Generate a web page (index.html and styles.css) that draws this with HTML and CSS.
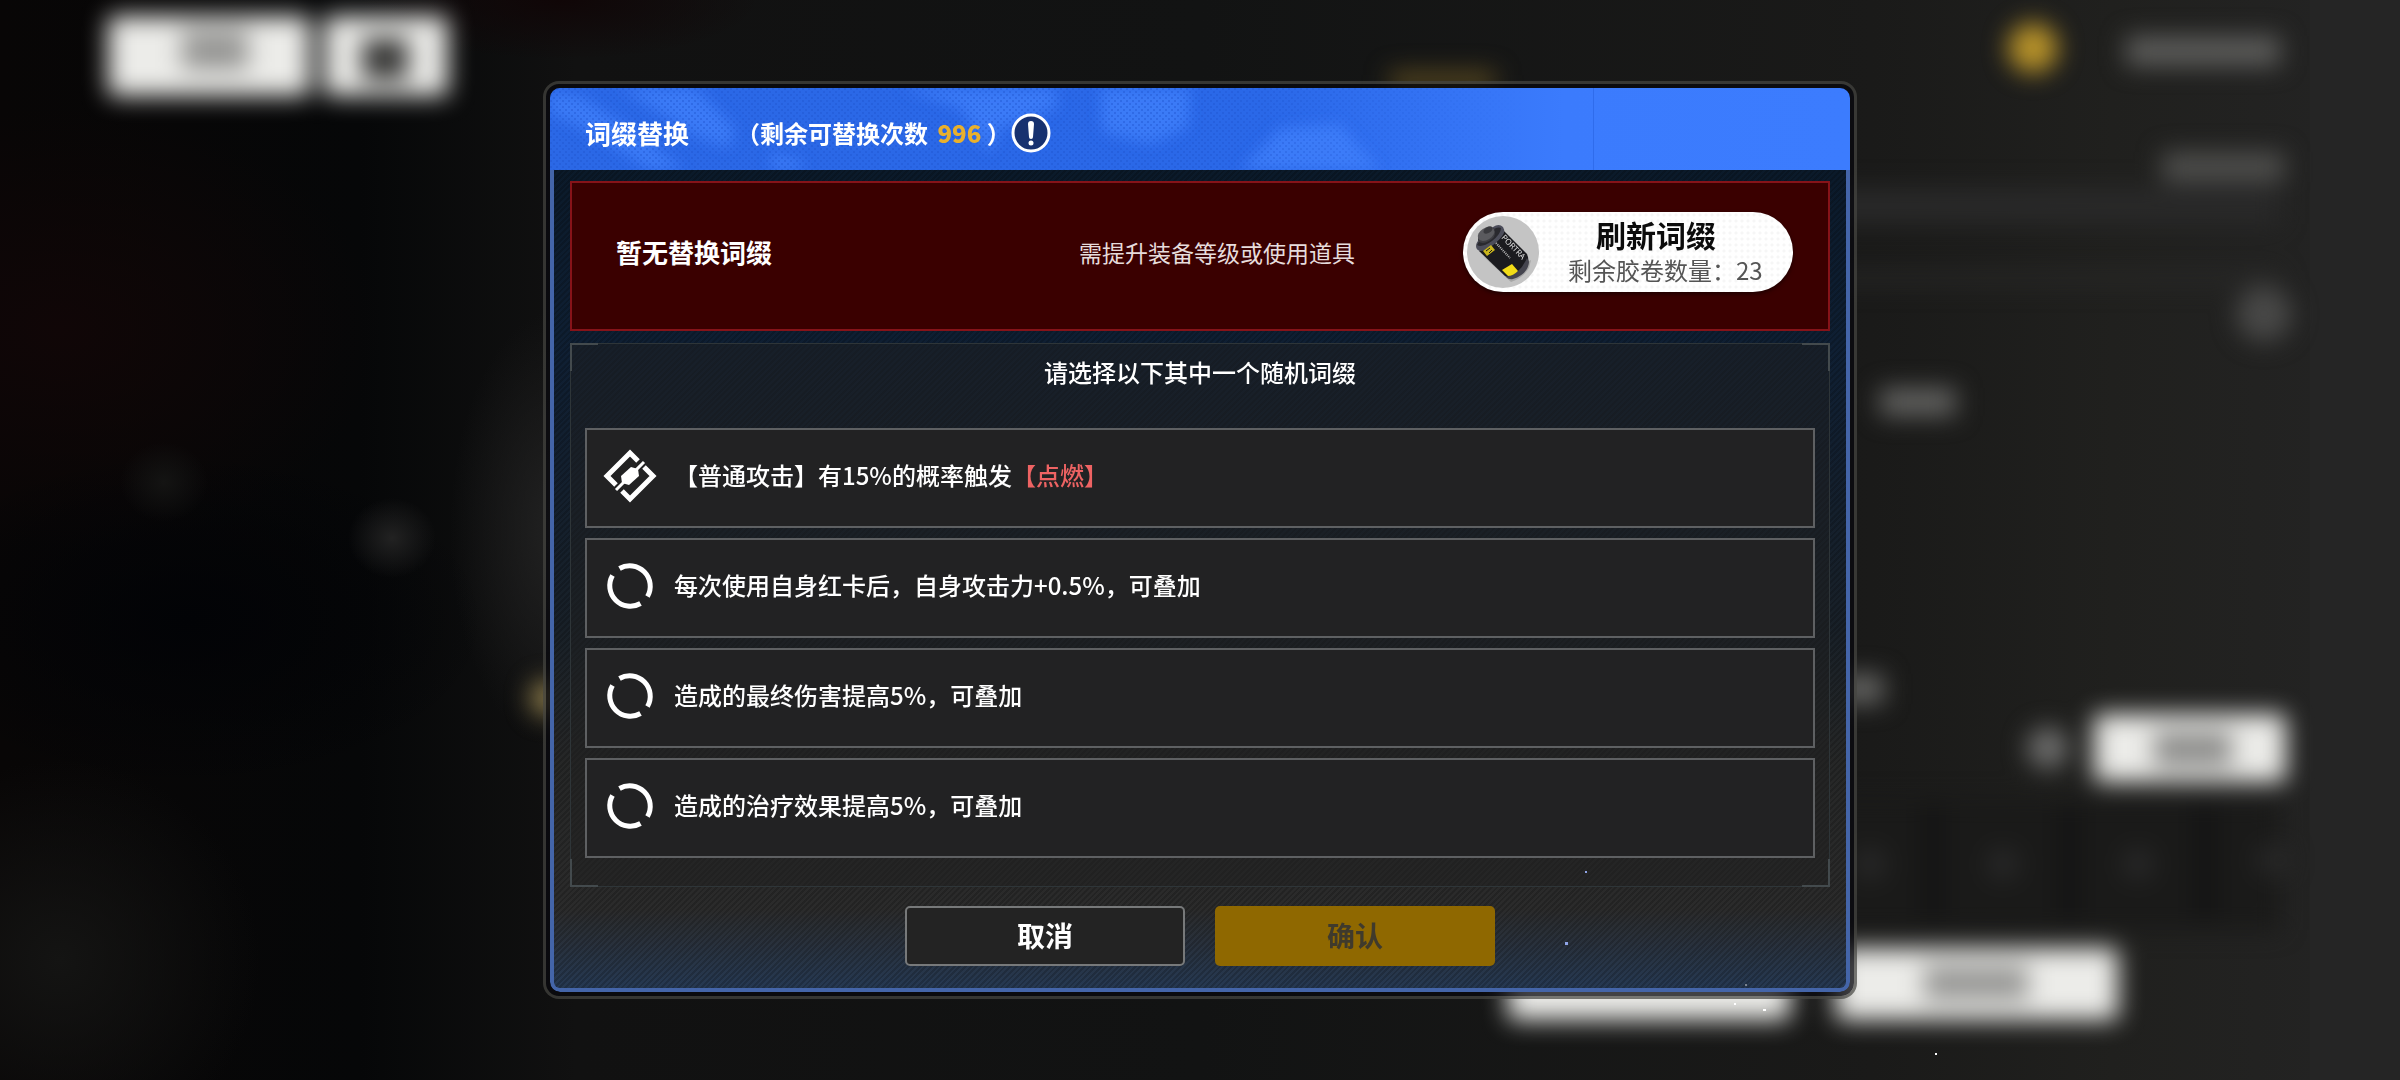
FILE: index.html
```html
<!DOCTYPE html>
<html lang="zh-CN">
<head>
  <meta charset="UTF-8" />
  <title>词缀替换</title>
  <meta name="viewport" content="width=device-width, initial-scale=1.0" />
  <link rel="stylesheet" href="styles.css">
</head>
<body>

  <!-- blurred game screen behind the dialog -->
  <svg class="backdrop" viewBox="0 0 2400 1080" preserveAspectRatio="none" aria-hidden="true">
    <defs>
      <linearGradient id="scene" x1="0" y1="0" x2="1" y2="0">
        <stop offset="0" stop-color="#080606" />
        <stop offset="0.15" stop-color="#060708" />
        <stop offset="0.24" stop-color="#111111" />
        <stop offset="0.5" stop-color="#121313" />
        <stop offset="0.78" stop-color="#1a1a19" />
        <stop offset="0.88" stop-color="#20201e" />
        <stop offset="1" stop-color="#242424" />
      </linearGradient>
      <radialGradient id="red"><stop offset="0" stop-color="#100607" /><stop offset="1" stop-color="#100607" stop-opacity="0" /></radialGradient>
      <radialGradient id="black"><stop offset="0" stop-color="#020306" /><stop offset="1" stop-color="#020306" stop-opacity="0" /></radialGradient>
      <radialGradient id="grey"><stop offset="0" stop-color="#222" /><stop offset="1" stop-color="#222" stop-opacity="0" /></radialGradient>
      <radialGradient id="dusk"><stop offset="0" stop-color="#141413" /><stop offset="1" stop-color="#141413" stop-opacity="0" /></radialGradient>
      <filter id="soft" filterUnits="userSpaceOnUse" x="0" y="-60" width="2400" height="1200" color-interpolation-filters="sRGB"><feGaussianBlur stdDeviation="12" /></filter>
    </defs>
    <rect width="2400" height="1080" fill="url(#scene)" />
    <rect x="2310" width="90" height="1080" fill="#252525" />

    <ellipse cx="60" cy="330" rx="320" ry="220" fill="url(#red)" />
    <ellipse cx="560" cy="0" rx="200" ry="60" fill="url(#red)" />
    <ellipse cx="190" cy="620" rx="300" ry="170" fill="url(#black)" />
    <ellipse cx="560" cy="530" rx="110" ry="220" fill="url(#grey)" />
    <ellipse cx="60" cy="960" rx="200" ry="200" fill="url(#dusk)" />
    <ellipse cx="164" cy="482" rx="44" ry="40" fill="url(#dusk)" />
    <ellipse cx="392" cy="538" rx="44" ry="40" fill="url(#grey)" />

    <g filter="url(#soft)">
      <rect x="108" y="16" width="202" height="80" rx="6" fill="#ecece9" />
      <rect x="182" y="30" width="66" height="40" fill="#969694" />
      <rect x="324" y="16" width="124" height="80" rx="6" fill="#ecece9" />
      <rect x="362" y="38" width="46" height="42" fill="#383837" />

      <circle cx="2033" cy="48" r="25" fill="#b8932a" />
      <rect x="2126" y="36" width="154" height="30" fill="#5c5c5a" />
      <rect x="2162" y="152" width="122" height="30" fill="#4e4e4c" />
      <rect x="1830" y="188" width="450" height="36" fill="#292929" />
      <rect x="1830" y="272" width="450" height="12" fill="#292928" />
      <circle cx="2264" cy="314" r="28" fill="#484847" />
      <rect x="1880" y="388" width="76" height="28" fill="#626260" />
      <rect x="1840" y="674" width="44" height="30" fill="#626260" />
      <rect x="1390" y="72" width="105" height="18" fill="#5a4a20" />
      <circle cx="548" cy="698" r="18" fill="#8a7a4a" />

      <circle cx="2048" cy="748" r="21" fill="#6c6c6b" />
      <rect x="2094" y="714" width="192" height="68" rx="6" fill="#ecece9" />
      <rect x="2154" y="732" width="78" height="34" fill="#8c8c8a" />

      <rect x="1830" y="800" width="450" height="130" fill="#1a1a19" />
      <g fill="#141414">
        <rect x="1922" y="806" width="22" height="110" />
        <rect x="2058" y="806" width="22" height="110" />
        <rect x="2194" y="806" width="22" height="110" />
      </g>
      <g fill="#282828">
        <circle cx="1870" cy="864" r="16" />
        <circle cx="2003" cy="864" r="16" />
        <circle cx="2138" cy="864" r="16" />
        <circle cx="2272" cy="860" r="16" />
      </g>

      <rect x="1508" y="948" width="282" height="72" rx="6" fill="#ecece9" />
      <rect x="1836" y="948" width="282" height="72" rx="6" fill="#ecece9" />
      <rect x="1924" y="966" width="104" height="34" fill="#969694" />
    </g>
  </svg>

  <main class="stage">
    <section class="dialog-frame" role="dialog" aria-labelledby="dialog-title">
      <div class="dialog">

        <header class="dialog-header">
          <svg class="header-art" viewBox="0 0 1300 82" preserveAspectRatio="none" aria-hidden="true">
            <defs>
              <linearGradient id="headerBlue" x1="0" y1="0" x2="1" y2="0">
                <stop offset="0" stop-color="#2b68e6" />
                <stop offset="0.55" stop-color="#2a68e8" />
                <stop offset="0.78" stop-color="#3b7bfd" />
                <stop offset="1" stop-color="#3c7cfe" />
              </linearGradient>
              <pattern id="dots" width="6" height="6" patternUnits="userSpaceOnUse">
                <circle cx="1" cy="1" r="1" fill="#1f55cf" />
                <circle cx="4" cy="4" r="1" fill="#1f55cf" />
              </pattern>
              <linearGradient id="dotFade" x1="0" y1="0" x2="1" y2="0">
                <stop offset="0" stop-color="#fff" />
                <stop offset="0.5" stop-color="#fff" />
                <stop offset="0.75" stop-color="#000" />
              </linearGradient>
              <mask id="dotMask"><rect width="1300" height="82" fill="url(#dotFade)" /></mask>
              <filter id="artBlur"><feGaussianBlur stdDeviation="7" /></filter>
            </defs>
            <rect width="1300" height="82" fill="url(#headerBlue)" />
            <g fill="#4080fb" opacity="0.8" filter="url(#artBlur)">
              <path d="M0 4 L30 8 L85 44 L135 82 L100 82 L60 56 L0 24 Z" />
              <path d="M70 0 L145 0 L185 40 L180 60 L150 50 Z" />
              <path d="M350 0 L505 0 L508 20 L450 40 L440 66 L410 20 Z" />
              <path d="M550 0 L640 0 L638 40 L600 56 L552 44 Z" />
              <path d="M220 64 L255 74 L250 82 L222 82 Z" />
              <path d="M730 40 L790 36 L830 82 L690 82 Z" />
            </g>
            <rect width="1300" height="82" fill="url(#dots)" mask="url(#dotMask)" opacity="0.55" />
            <rect x="1043" width="1" height="82" fill="#2f6cec" />
          </svg>
          <h1 id="dialog-title">词缀替换</h1>
          <p class="remaining">（剩余可替换次数 <strong>996</strong> ）</p>
          <button class="info-button" type="button" aria-label="说明">
            <svg viewBox="0 0 40 40" aria-hidden="true">
              <circle cx="20" cy="20" r="18" fill="#17316f" stroke="#fff" stroke-width="3" />
              <path d="M17 11 a3 3 0 0 1 6 0 L22 24 a2 2 0 0 1 -4 0 Z" fill="#fff" />
              <circle cx="20" cy="30" r="2.5" fill="#fff" />
            </svg>
          </button>
        </header>

        <div class="dialog-body">

          <div class="current">
            <h2>暂无替换词缀</h2>
            <p>需提升装备等级或使用道具</p>
            <button class="refresh-button" type="button">
              <svg class="film" viewBox="0 0 72 72" aria-hidden="true">
                <circle cx="36" cy="36" r="36" fill="#c4c4c4" />
                <path d="M16 40 L44 66 Q56 62 62 52 L64 44 L40 58 Z" fill="#a6a6a6" />
                <path d="M12 35 L36 14 L60 38 Q63 45 60 51 Q53 61 42 62 L38 60 Z" fill="#1b1b1f" />
                <path d="M39 61 Q53 58 60 42 L62 46 Q61 58 46 63 Q42 64 39 61 Z" fill="#45454f" />
                <path d="M9 30 Q9 26 14 22 L26 11 Q32 7 36 11 Q38 14 37 17 Q34 23 26 29 Q19 35 13 35 Q9 34 9 30 Z" fill="#4c4d5a" />
                <path d="M10 29 Q12 24 21 17 Q30 10 34 12 Q34 18 25 25 Q15 32 10 29 Z" fill="#29292e" />
                <path d="M11 20 L11 25 Q15 29 22 25 Q29 21 28 16 L27 12 Z" fill="#3d3d42" />
                <ellipse cx="19" cy="18" rx="9" ry="6" transform="rotate(-32 19 18)" fill="#5a5a5e" />
                <ellipse cx="21" cy="14" rx="5" ry="3" transform="rotate(-32 21 14)" fill="#3a3a3e" />
                <path d="M16 35 L24 29 L28 34 L20 40 Z" fill="#c9b51c" />
                <path d="M19 35 L23 32 M22 37 L25 34" stroke="#1b1b1f" stroke-width="1" />
                <path d="M35 54 L45 48 L51 55 Q46 60 41 60 Z" fill="#f2dc17" />
                <text class="film-label" transform="translate(34 22) rotate(46)">PORTRA</text>
                <path d="M29 27 L43 42" stroke="#bdbdbd" stroke-width="2" stroke-dasharray="1 1" />
              </svg>
              <span class="refresh-text">
                <span class="refresh-title">刷新词缀</span>
                <span class="refresh-count">剩余胶卷数量：23</span>
              </span>
            </button>
          </div>

          <div class="choices">
            <h3>请选择以下其中一个随机词缀</h3>
            <ul>
              <li>
                <button class="choice" type="button">
                  <svg class="choice-icon" viewBox="0 0 54 54" aria-hidden="true">
                    <g fill="none" stroke="#fff" stroke-width="5">
                      <path d="M13 36 L4 27 L27 4 L35 12" />
                      <path d="M41 18 L50 27 L27 50 L19 42" />
                    </g>
                    <path d="M13 41 L41 13" stroke="#fff" stroke-width="3" />
                    <path d="M28 18 L35 20 L36 27 L26 36 L19 34 L18 27 Z" fill="#fff" />
                  </svg>
                  <span>【普通攻击】有15%的概率触发<em>【点燃】</em></span>
                </button>
              </li>
              <li>
                <button class="choice" type="button">
                  <svg class="choice-icon" viewBox="0 0 54 54" aria-hidden="true">
                    <g id="ring" fill="none" stroke="#fff" stroke-width="5">
                      <path d="M16.5 9.5 A20.5 20.5 0 0 1 44.5 37.5" />
                      <path d="M37.5 44.5 A20.5 20.5 0 0 1 9.5 16.5" />
                    </g>
                  </svg>
                  <span>每次使用自身红卡后，自身攻击力+0.5%，可叠加</span>
                </button>
              </li>
              <li>
                <button class="choice" type="button">
                  <svg class="choice-icon" viewBox="0 0 54 54" aria-hidden="true"><use href="#ring" /></svg>
                  <span>造成的最终伤害提高5%，可叠加</span>
                </button>
              </li>
              <li>
                <button class="choice" type="button">
                  <svg class="choice-icon" viewBox="0 0 54 54" aria-hidden="true"><use href="#ring" /></svg>
                  <span>造成的治疗效果提高5%，可叠加</span>
                </button>
              </li>
            </ul>
          </div>

          <footer class="actions">
            <button class="cancel" type="button">取消</button>
            <button class="confirm" type="button" disabled>确认</button>
          </footer>

        </div>
      </div>
    </section>
  </main>

  <svg class="particles" viewBox="0 0 2400 1080" preserveAspectRatio="none" aria-hidden="true">
    <g fill="#8fa4e8">
      <rect x="1585" y="871" width="2" height="2" />
      <rect x="1565" y="942" width="3" height="3" />
    </g>
    <g fill="#fff">
      <rect x="1763" y="1009" width="3" height="2" />
      <rect x="1734" y="1003" width="2" height="2" />
      <rect x="1935" y="1053" width="2" height="2" />
      <rect x="1745" y="984" width="2" height="2" opacity="0.4" />
    </g>
  </svg>

</body>
</html>
```
FILE: styles.css
```css
* {
  box-sizing: border-box;
}

body {
  margin: 0;
  background: #111;
  color: #fff;
  font-family: "Noto Sans CJK SC", sans-serif;
  font-size: 24px;
  line-height: 36px;
}

h1, h2, h3, p, ul {
  margin: 0;
  padding: 0;
}

ul {
  list-style: none;
}

button {
  font: inherit;
  color: inherit;
  cursor: pointer;
}

.backdrop,
.particles {
  position: fixed;
  inset: 0;
  width: 100%;
  height: 100%;
}

.particles {
  pointer-events: none;
}

.stage {
  position: relative;
  min-height: 100vh;
  display: flex;
  align-items: center;
  justify-content: center;
}

/* dialog */
.dialog-frame {
  width: 92%;
  max-width: 1314px;
  padding: 4px;
  border: 3px solid rgba(70, 70, 66, 0.7);
  border-radius: 16px;
  background: rgba(8, 8, 14, 0.75);
  background-clip: padding-box;
}

.dialog {
  border-radius: 10px;
  overflow: hidden;
}

.dialog-header {
  position: relative;
  display: flex;
  align-items: center;
  min-height: 82px;
  padding: 7px 35px 0;
}

.header-art {
  position: absolute;
  inset: 0;
  width: 100%;
  height: 100%;
}

.dialog-header h1 {
  position: relative;
  font-size: 26px;
  font-weight: 700;
}

.remaining {
  position: relative;
  margin-left: 47px;
  font-weight: 700;
}

.remaining strong {
  margin-left: 4px;
  color: #e9b02c;
}

.info-button {
  position: relative;
  width: 40px;
  height: 40px;
  padding: 0;
  border: 0;
  background: none;
}

.info-button svg {
  display: block;
}

.dialog-body {
  display: flex;
  flex-direction: column;
  padding: 11px 16px 22px;
  border: 4px solid #4465a9;
  border-top: 0;
  border-radius: 0 0 10px 10px;
  background:
    repeating-linear-gradient(135deg, rgba(0, 0, 0, 0.18) 0 2px, transparent 2px 4px),
    linear-gradient(#0b1a2a 0%, #0f1f33 22%, #182028 55%, #262727 72%, #2b2b2b 90%, #263850 99%);
  background-origin: border-box;
}

/* current affix */
.current {
  display: flex;
  align-items: center;
  min-height: 150px;
  padding: 0 35px 8px 44px;
  border: 2px solid #861319;
  background: #3a0000;
}

.current h2 {
  font-size: 26px;
  font-weight: 700;
}

.current p {
  margin: 0 108px 0 auto;
  font-size: 23px;
  color: #e6dcdc;
}

.refresh-button {
  display: flex;
  align-items: center;
  width: 330px;
  height: 80px;
  padding: 0 0 0 4px;
  border: 0;
  border-radius: 40px;
  background:
    radial-gradient(circle, #f6f6f6 1px, transparent 2px) 0 0 / 6px 6px,
    #fff;
  box-shadow: 0 2px 4px rgba(0, 0, 0, 0.5);
  text-align: left;
  white-space: nowrap;
}

.film {
  width: 72px;
  height: 72px;
}

.film-label {
  fill: #e8e8e8;
  font-family: "Open Sans", sans-serif;
  font-size: 8px;
}

.refresh-text {
  display: flex;
  flex-direction: column;
  padding-left: 29px;
}

.refresh-title {
  padding-left: 28px;
  font-size: 30px;
  font-weight: 700;
  color: #0c0c0c;
}

.refresh-count {
  color: #555;
}

/* choices: thin frame with brighter corners */
.choices {
  --line: #2e3538;
  --corner: #434a4d;
  margin-top: 12px;
  padding: 0 15px 29px;
  background:
    linear-gradient(var(--corner), var(--corner)) 0 0 / 28px 2px,
    linear-gradient(var(--corner), var(--corner)) 0 0 / 2px 28px,
    linear-gradient(var(--corner), var(--corner)) 100% 0 / 28px 2px,
    linear-gradient(var(--corner), var(--corner)) 100% 0 / 2px 28px,
    linear-gradient(var(--corner), var(--corner)) 0 100% / 28px 2px,
    linear-gradient(var(--corner), var(--corner)) 0 100% / 2px 28px,
    linear-gradient(var(--corner), var(--corner)) 100% 100% / 28px 2px,
    linear-gradient(var(--corner), var(--corner)) 100% 100% / 2px 28px,
    linear-gradient(var(--line), var(--line)) 0 0 / 100% 1px,
    linear-gradient(var(--line), var(--line)) 0 100% / 100% 1px,
    linear-gradient(var(--line), var(--line)) 0 0 / 1px 100%,
    linear-gradient(var(--line), var(--line)) 100% 0 / 1px 100%,
    rgba(32, 32, 32, 0.5);
  background-repeat: no-repeat;
}

.choices h3 {
  padding: 11px 0 38px;
  font-size: 24px;
  font-weight: 500;
  text-align: center;
}

.choices ul {
  display: flex;
  flex-direction: column;
  gap: 10px;
}

.choice {
  display: flex;
  align-items: center;
  gap: 17px;
  width: 100%;
  min-height: 100px;
  padding: 0 16px 4px;
  border: 2px solid #5e6062;
  background: #222223;
  font-weight: 500;
  text-align: left;
}

.choice span {
  padding-bottom: 3px;
}

.choice-icon {
  width: 54px;
  height: 54px;
}

.choice em {
  font-style: normal;
  color: #ee6363;
}

/* footer buttons */
.actions {
  display: flex;
  justify-content: center;
  gap: 30px;
  margin-top: 19px;
}

.actions button {
  width: 280px;
  height: 60px;
  padding: 0 0 2px;
  border-radius: 5px;
  font-size: 28px;
  font-weight: 700;
}

.actions .cancel {
  border: 2px solid #77797a;
  background: #232323;
}

.actions .confirm {
  border: 0;
  background: #8f6800;
  color: #3f3a2c;
  cursor: default;
}
```
